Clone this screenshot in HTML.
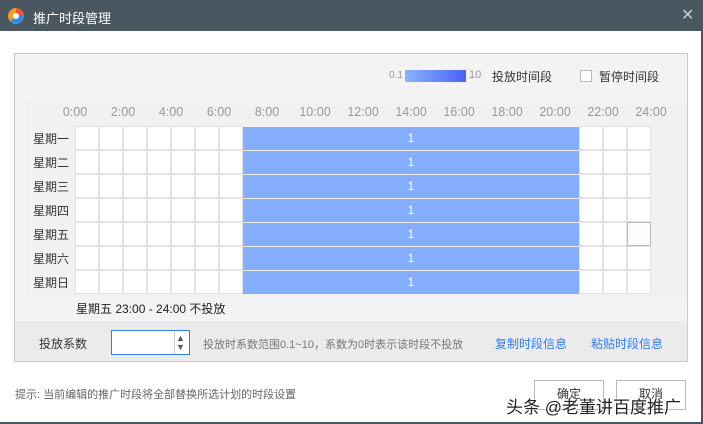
<!DOCTYPE html>
<html><head><meta charset="utf-8"><style>
*{margin:0;padding:0;box-sizing:border-box}
body{width:703px;height:424px;overflow:hidden;background:#fff;font-family:"Liberation Sans","Noto Sans CJK SC",sans-serif;position:relative;font-size:12px}
.abs{position:absolute}
.title{left:0;top:0;width:703px;height:31px;background:#4a5660;color:#fff;font-size:13px}
.panel{left:14px;top:53px;width:674px;height:309px;background:#f3f3f3;border:1px solid #c8c8c8}
.band{left:0;top:267px;width:672px;height:40px;background:#ebebeb}
.lbl{color:#999;font-size:12.5px;width:44px;text-align:center}
.day{color:#333;font-size:12px}
.cell{position:absolute;width:24px;height:24px;background:#fff;border:1px solid #e2e2e2}
.blue{position:absolute;background:#85adfd;color:#fff;text-align:center;line-height:23px;height:23px;font-size:12px}
.link{color:#2f7ef5;font-size:12px}
.btn{border:1px solid #bbb;background:#fff;height:30px;text-align:center;line-height:26px;font-size:12px;color:#333}
</style></head><body>
<div class="abs title">
 <svg class="abs" style="left:7px;top:7px" width="18" height="18" viewBox="0 0 18 18"><circle cx="9" cy="9" r="8" fill="#f0a020"/><path d="M9 1a8 8 0 0 1 8 8h-5a3 3 0 0 0-3-3z" fill="#e53"/><path d="M17 9a8 8 0 0 1-14 5l4-3a3 3 0 0 0 5-2z" fill="#2a8ee8"/><circle cx="9" cy="9" r="3" fill="#fff"/></svg>
 <div class="abs" style="left:33px;top:8px">推广时段管理</div>
 <div class="abs" style="left:681px;top:5px;font-size:16px;color:#ccc">✕</div>
</div>
<div class="abs panel">
 <div class="abs" style="left:374px;top:16px;font-size:10px;color:#999">0.1</div>
 <div class="abs" style="left:390px;top:16px;width:61px;height:12px;background:linear-gradient(90deg,#8ab4fb,#4a62f5)"></div>
 <div class="abs" style="left:454px;top:15px;font-size:11px;color:#999">10</div>
 <div class="abs" style="left:477px;top:14px;color:#333">投放时间段</div>
 <div class="abs" style="left:565px;top:16px;width:12px;height:12px;border:1px solid #bbb;background:#fff"></div>
 <div class="abs" style="left:584px;top:14px;color:#333">暂停时间段</div>
 <div class="abs" style="left:12px;top:47px;width:660px;height:196px;background:#f1f1f1"></div>
 <div class="abs band"></div>
 <div class="abs" style="left:24px;top:281px;width:64px;color:#333">投放系数</div>
 <div class="abs" style="left:96px;top:276px;width:79px;height:25px;border:1px solid #2f7ef5;background:#fff"><div class="abs" style="left:62px;top:0;width:1px;height:23px;background:#ccc"></div><div class="abs" style="left:64px;top:2px;font-size:9px;color:#555">▲</div><div class="abs" style="left:64px;top:11px;font-size:9px;color:#555">▼</div></div>
 <div class="abs" style="left:188px;top:282px;font-size:11px;color:#777">投放时系数范围0.1~10，系数为0时表示该时段不投放</div>
 <div class="abs link" style="left:480px;top:281px">复制时段信息</div>
 <div class="abs link" style="left:576px;top:281px">粘贴时段信息</div>
 <div class="abs day" style="left:61px;top:246px;color:#222">星期五 23:00 - 24:00 不投放</div>
</div>
<div id="g"></div>
<div class="abs" style="left:15px;top:386px;font-size:11px;color:#666">提示: 当前编辑的推广时段将全部替换所选计划的时段设置</div>
<div class="abs btn" style="left:534px;top:380px;width:70px">确定</div>
<div class="abs btn" style="left:616px;top:380px;width:70px">取消</div>
<div class="abs" style="left:506px;top:393px;font-size:17px;color:#222;text-shadow:0 0 2px #fff,0 0 1px #fff">头条 @老董讲百度推广</div>
<div class="abs" style="left:0;top:422px;width:703px;height:2px;background:#4a5660"></div>
<div class="abs" style="left:701px;top:0;width:2px;height:424px;background:#4a5660"></div>
<script>
var g=document.getElementById('g'),h='';
for(var i=0;i<=12;i++){h+='<div class="abs lbl" style="left:'+(53+i*48)+'px;top:105px">'+(i*2)+':00</div>';}
var d=['一','二','三','四','五','六','日'];
for(var r=0;r<7;r++){var y=126+r*24;
 h+='<div class="abs day" style="left:33px;top:'+(y+4)+'px">星期'+d[r]+'</div>';
 for(var c=0;c<24;c++){if(c>=7&&c<21)continue;var s=(r==4&&c==23)?'border:1px solid #bbb;background:#fcfcfc':'';h+='<div class="cell" style="left:'+(75+c*24)+'px;top:'+y+'px;'+s+'"></div>';}
 h+='<div class="blue" style="left:243px;top:'+(y+1)+'px;width:336px">1</div>';}
g.innerHTML=h;
</script>
</body></html>
